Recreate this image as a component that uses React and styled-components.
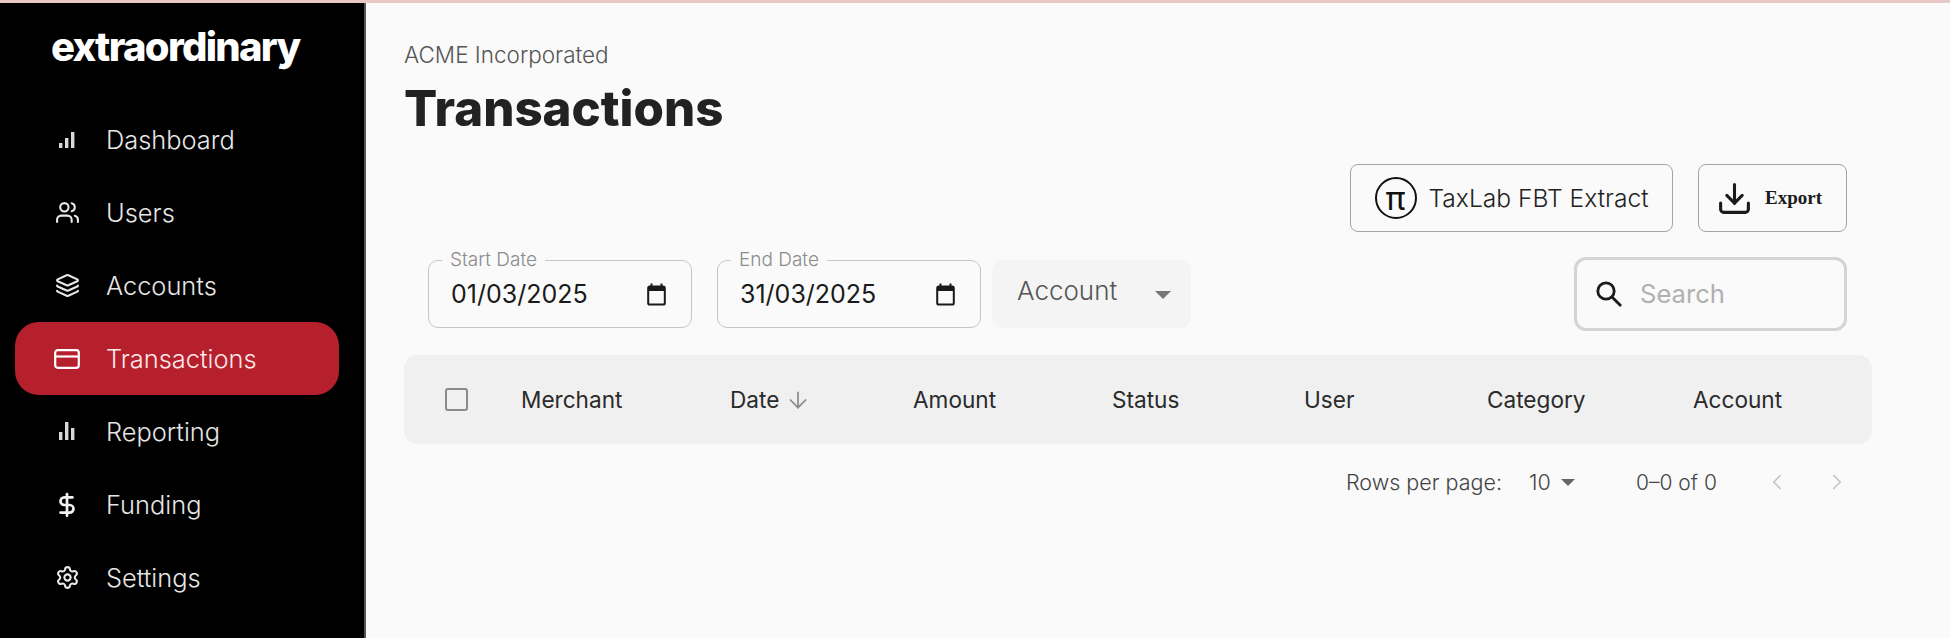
import React from "react";
import styled, { createGlobalStyle } from "styled-components";
import { Users, Layers, DollarSign, Settings, Download, ArrowDown, ChevronLeft, ChevronRight } from "lucide-react";

const GlobalStyle = createGlobalStyle`
  html, body {
    margin: 0;
    padding: 0;
    height: 100%;
    overflow: hidden;
    background: #fafafa;
    font-family: Inter, "Liberation Sans", sans-serif;
  }
  * {
    box-sizing: border-box;
  }
`;

const BarsIcon = ({ heights }) => (
  <svg width="18" height="20" viewBox="0 0 18 20" fill="#d8d8d8">
    {heights.map((h, i) => (
      <rect key={i} x={1 + i * 6} y={18 - h} width="3.4" height={h} />
    ))}
  </svg>
);

const CardIcon = () => (
  <svg width="26" height="20" viewBox="0 0 26 20" fill="none" stroke="#fff" strokeWidth="2.2">
    <rect x="1.2" y="1.2" width="23.6" height="17.6" rx="2.5" />
    <path d="M1.2 7.5h23.6" />
  </svg>
);

const CalendarIcon = () => (
  <svg width="19" height="23" viewBox="0 0 19 23" fill="none">
    <rect x="1.2" y="3.4" width="16.6" height="18.2" rx="1.6" stroke="#1a1a1a" strokeWidth="2" />
    <rect x="1" y="3" width="17" height="5" fill="#1a1a1a" />
    <rect x="3.5" y="0.5" width="2" height="3" fill="#1a1a1a" />
    <rect x="13.5" y="0.5" width="2" height="3" fill="#1a1a1a" />
  </svg>
);

const SearchIcon = () => (
  <svg width="28" height="28" viewBox="0 0 28 28" fill="none" stroke="#1a1a1a" strokeWidth="2.8">
    <circle cx="11" cy="11" r="8.2" />
    <path d="M17 17l9 9" />
  </svg>
);

const navItems = [
  { label: "Dashboard", icon: <BarsIcon heights={[5, 10, 16]} /> },
  { label: "Users", icon: <Users size={25} strokeWidth={2} color="#e8e8e8" /> },
  { label: "Accounts", icon: <Layers size={25} strokeWidth={2} color="#e8e8e8" /> },
  { label: "Transactions", icon: <CardIcon />, active: true },
  { label: "Reporting", icon: <BarsIcon heights={[8, 18, 12]} /> },
  { label: "Funding", icon: <DollarSign size={26} strokeWidth={2.5} color="#f0f0f0" /> },
  { label: "Settings", icon: <Settings size={25} strokeWidth={2} color="#e8e8e8" /> },
];

const columns = [
  { label: "Merchant", width: 209 },
  { label: "Date", width: 183, sorted: true },
  { label: "Amount", width: 199 },
  { label: "Status", width: 192 },
  { label: "User", width: 183 },
  { label: "Category", width: 206 },
  { label: "Account", width: 130 },
];

export default function App() {
  return (
    <>
      <GlobalStyle />
      <Page>
        <Sidebar>
          <Logo>extraordinary</Logo>
          <NavList>
            {navItems.map((item) => (
              <NavItem key={item.label} $active={item.active}>
                <NavIcon>{item.icon}</NavIcon>
                {item.label}
              </NavItem>
            ))}
          </NavList>
        </Sidebar>
        <Main>
          <Company>ACME Incorporated</Company>
          <Title>Transactions</Title>
          <Actions>
            <OutlineButton $width={323}>
              <PiBadge>π</PiBadge>
              TaxLab FBT Extract
            </OutlineButton>
            <OutlineButton $width={149}>
              <Download size={37} strokeWidth={2} color="#1a1a1a" />
              <ExportLabel>Export</ExportLabel>
            </OutlineButton>
          </Actions>
          <Filters>
            <DateField>
              <FieldLabel>Start Date</FieldLabel>
              <DateValue>01/03/2025</DateValue>
              <CalendarIcon />
            </DateField>
            <DateField>
              <FieldLabel>End Date</FieldLabel>
              <DateValue>31/03/2025</DateValue>
              <CalendarIcon />
            </DateField>
            <SelectField>
              Account
              <Caret />
            </SelectField>
            <SearchBox>
              <SearchIcon />
              <SearchText>Search</SearchText>
            </SearchBox>
          </Filters>
          <TableHead>
            <CheckCell>
              <Checkbox />
            </CheckCell>
            {columns.map((col) => (
              <HeadCell key={col.label} $width={col.width}>
                {col.label}
                {col.sorted && <ArrowDown size={26} strokeWidth={1.6} color="#8a8a8a" />}
              </HeadCell>
            ))}
          </TableHead>
          <Pagination>
            <RowsLabel>Rows per page:</RowsLabel>
            <RowsValue>
              10
              <SmallCaret />
            </RowsValue>
            <PageCount>0–0 of 0</PageCount>
            <PageArrows>
              <ChevronLeft size={26} strokeWidth={1.5} color="#c4c4c4" />
              <ChevronRight size={26} strokeWidth={1.5} color="#c4c4c4" />
            </PageArrows>
          </Pagination>
        </Main>
      </Page>
    </>
  );
}

const Page = styled.div`
  display: flex;
  height: 638px;
  border-top: 3px solid #e9c9c5;
`;

const Sidebar = styled.aside`
  width: 366px;
  flex-shrink: 0;
  background: #000;
  border-right: 2px solid #555;
  padding: 0 25px 0 15px;
`;

const Logo = styled.div`
  height: 100px;
  padding: 20px 0 0 36px;
  color: #fff;
  font-size: 40px;
  line-height: 48px;
  font-weight: 800;
  letter-spacing: -1.7px;
`;

const NavList = styled.nav`
  display: flex;
  flex-direction: column;
`;

const NavItem = styled.a`
  display: flex;
  align-items: center;
  height: 73px;
  padding-left: 38px;
  border-radius: 24px;
  font-size: 25.4px;
  font-weight: 300;
  color: ${(p) => (p.$active ? "#fde8e8" : "#e6e6e6")};
  background: ${(p) => (p.$active ? "#b5202c" : "transparent")};
`;

const NavIcon = styled.span`
  display: flex;
  align-items: center;
  justify-content: center;
  width: 28px;
  margin-right: 25px;
`;

const Main = styled.main`
  flex: 1;
  padding: 0 78px 0 38px;
  background: #fafafa;
`;

const Company = styled.div`
  margin-top: 39px;
  font-size: 22.5px;
  line-height: 26px;
  font-weight: 300;
  color: #555;
`;

const Title = styled.h1`
  margin: 10px 0 0;
  font-size: 49.2px;
  line-height: 60px;
  font-weight: 800;
  color: #222;
`;

const Actions = styled.div`
  display: flex;
  justify-content: flex-end;
  gap: 25px;
  margin-top: 26px;
  padding-right: 25px;
`;

const OutlineButton = styled.div`
  display: flex;
  align-items: center;
  justify-content: center;
  gap: 12px;
  width: ${(p) => p.$width}px;
  height: 68px;
  border: 1.5px solid #a4a4a4;
  border-radius: 8px;
  font-size: 24.6px;
  font-weight: 300;
  color: #222;
`;

const PiBadge = styled.span`
  display: flex;
  align-items: center;
  justify-content: center;
  width: 42px;
  height: 42px;
  border: 2.5px solid #111;
  border-radius: 50%;
  font-size: 33px;
  font-weight: 400;
  line-height: 1;
  color: #111;
`;

const ExportLabel = styled.span`
  margin-right: 7px;
  font-family: "Liberation Serif", serif;
  font-size: 19px;
  font-weight: 700;
  color: #1a1a1a;
`;

const Filters = styled.div`
  display: flex;
  align-items: center;
  gap: 25px;
  margin-top: 25px;
  padding: 0 25px 0 24px;
`;

const DateField = styled.div`
  position: relative;
  display: flex;
  align-items: center;
  justify-content: space-between;
  width: 264px;
  height: 68px;
  padding: 0 25px 0 22px;
  border: 1.5px solid #c6c6c6;
  border-radius: 10px;
`;

const FieldLabel = styled.span`
  position: absolute;
  top: -12px;
  left: 13px;
  padding: 0 8px;
  background: #fafafa;
  font-size: 19px;
  line-height: 22px;
  font-weight: 300;
  color: #8c8c8c;
`;

const DateValue = styled.span`
  font-size: 25px;
  color: #1a1a1a;
`;

const SelectField = styled.div`
  display: flex;
  align-items: center;
  justify-content: space-between;
  width: 199px;
  height: 68px;
  margin-left: -14px;
  padding: 0 20px 8px 25px;
  background: #f4f4f4;
  border-radius: 10px;
  font-size: 26px;
  font-weight: 300;
  color: #555;
`;

const Caret = styled.span`
  width: 0;
  height: 0;
  margin-top: 10px;
  border-left: 8px solid transparent;
  border-right: 8px solid transparent;
  border-top: 8px solid #777;
`;

const SearchBox = styled.div`
  display: flex;
  align-items: center;
  gap: 17px;
  width: 273px;
  height: 74px;
  margin-left: auto;
  padding-left: 18px;
  border: 3px solid #d4d4d4;
  border-radius: 12px;
`;

const SearchText = styled.span`
  margin-top: -2px;
  font-size: 25.6px;
  color: #b0b0b0;
`;

const TableHead = styled.div`
  display: flex;
  align-items: center;
  height: 89px;
  margin-top: 24px;
  background: #f0f0f0;
  border-radius: 14px;
`;

const CheckCell = styled.div`
  display: flex;
  width: 117px;
  padding-left: 41px;
`;

const Checkbox = styled.span`
  width: 23px;
  height: 23px;
  border: 2.5px solid #8a8a8a;
  border-radius: 3px;
`;

const HeadCell = styled.div`
  display: flex;
  align-items: center;
  gap: 6px;
  width: ${(p) => p.$width}px;
  font-size: 22.6px;
  font-weight: 400;
  color: #2a2a2a;
`;

const Pagination = styled.div`
  display: flex;
  align-items: center;
  height: 76px;
  padding-left: 942px;
  font-size: 21.5px;
  font-weight: 300;
  color: #444;
`;

const RowsLabel = styled.span`
  width: 183px;
`;

const RowsValue = styled.span`
  display: flex;
  align-items: center;
  gap: 10px;
  width: 107px;
`;

const SmallCaret = styled.span`
  width: 0;
  height: 0;
  border-left: 7px solid transparent;
  border-right: 7px solid transparent;
  border-top: 7px solid #666;
`;

const PageCount = styled.span`
  width: 128px;
  font-size: 21px;
`;

const PageArrows = styled.span`
  display: flex;
  gap: 34px;
`;
